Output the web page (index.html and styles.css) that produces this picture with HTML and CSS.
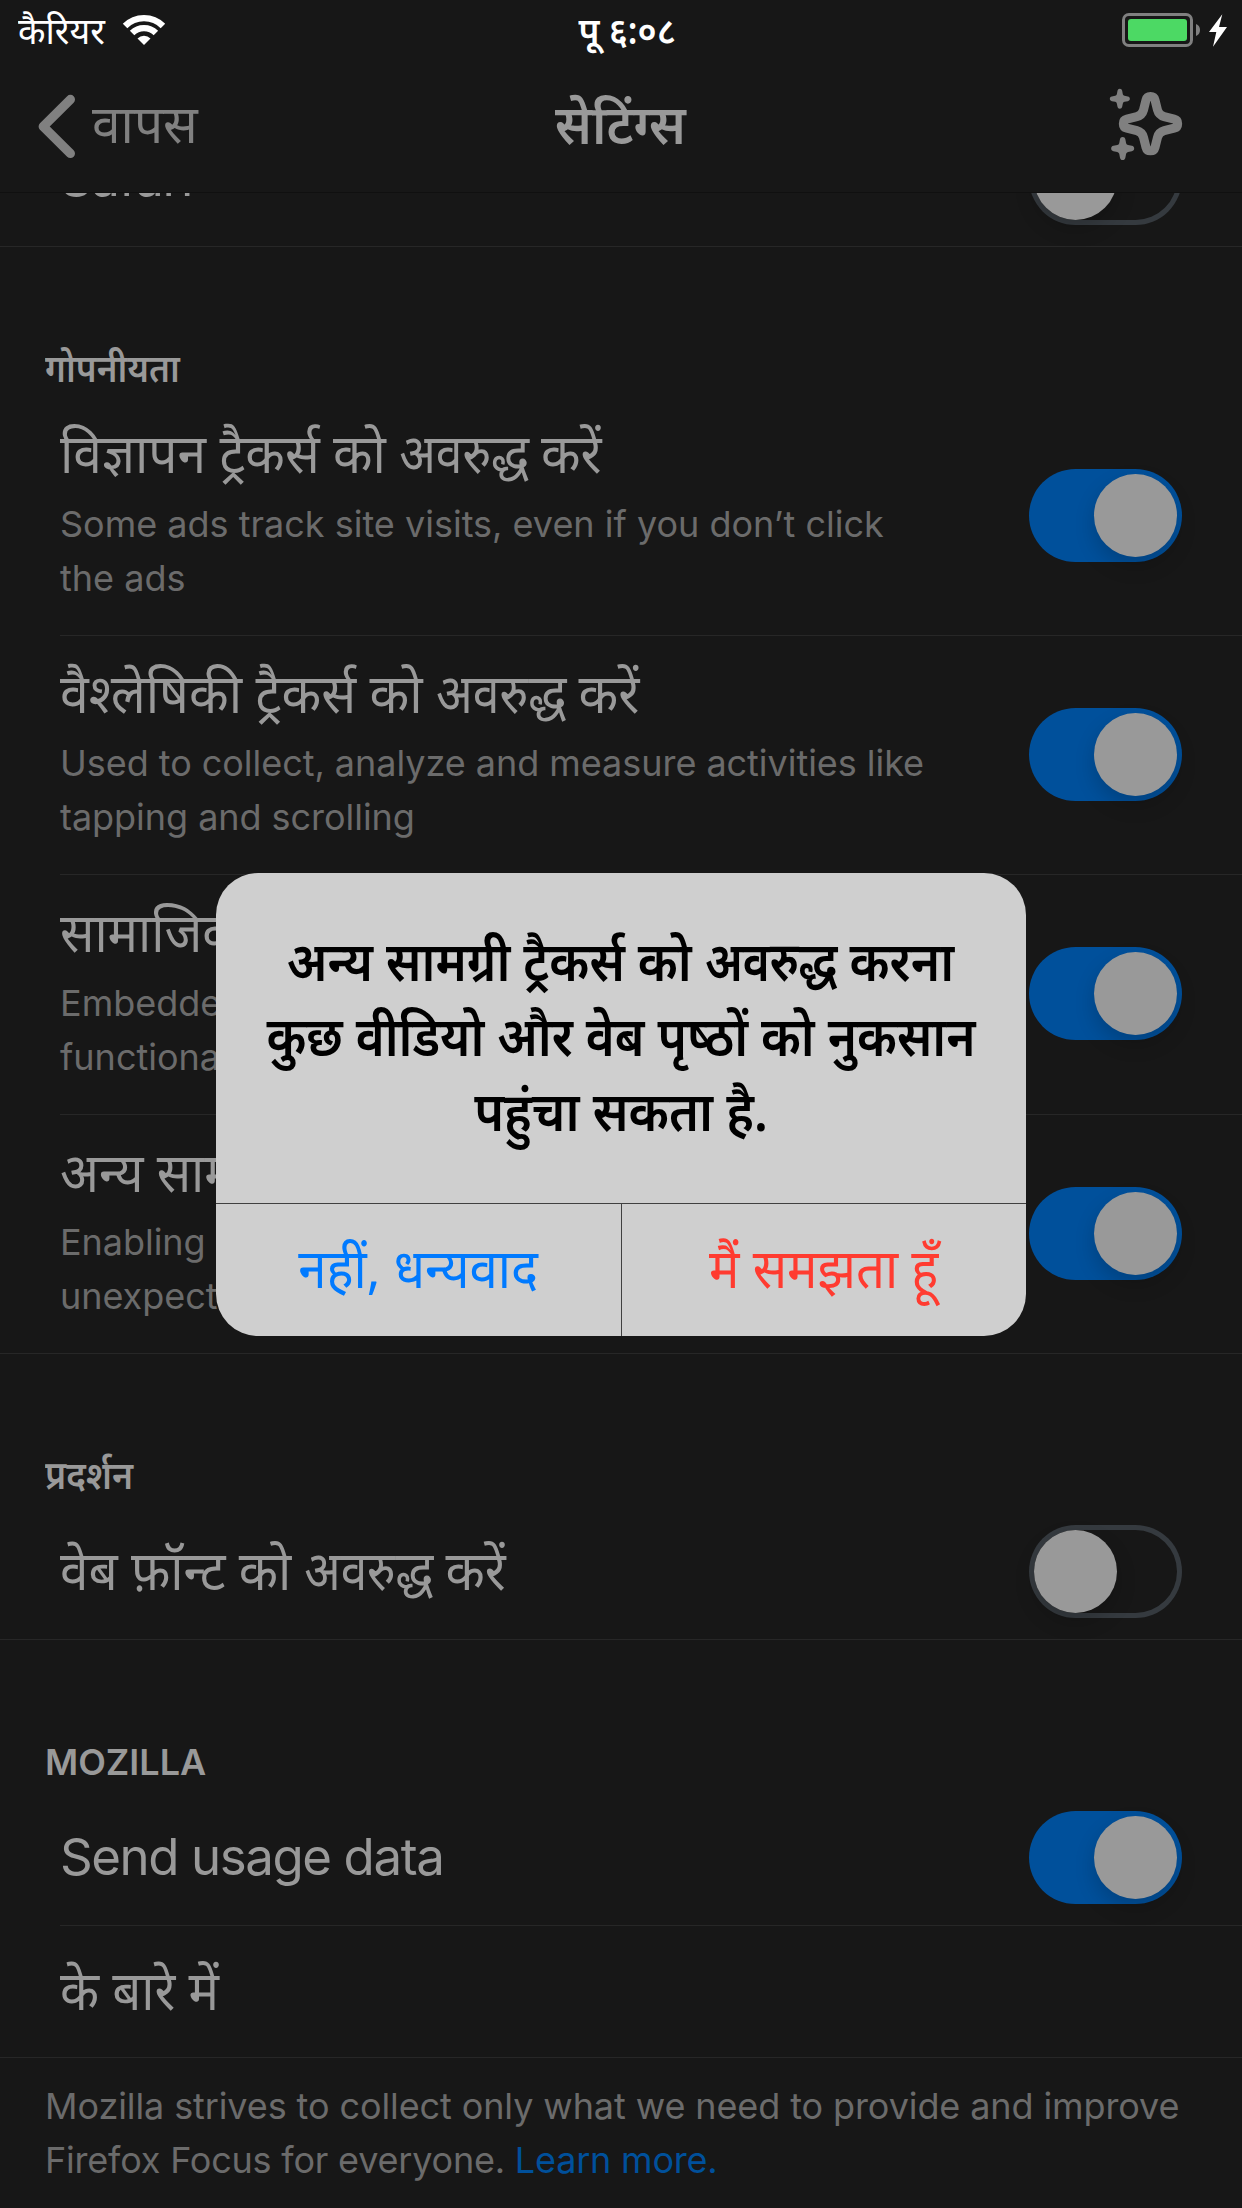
FILE: index.html
```html
<!DOCTYPE html>
<html lang="hi">
<head>
<meta charset="utf-8">
<meta name="viewport" content="width=device-width">
<title>सेटिंग्स</title>
<link rel="stylesheet" href="styles.css">
</head>
<body>
<div class="screen">
  <header class="top">
    <div class="status">
      <div class="status-left">
        <span class="carrier">कैरियर</span>
        <svg class="wifi" width="44" height="32" viewBox="0 0 44 32">
          <path d="M3.05 11.95A26.8 26.8 0 0 1 40.95 11.95" fill="none" stroke="#fff" stroke-width="6.4"/>
          <path d="M10.1 19A16.85 16.85 0 0 1 33.9 19" fill="none" stroke="#fff" stroke-width="6.3"/>
          <path d="M22 31L15.5 24.4A9.4 9.4 0 0 1 28.5 24.4Z" fill="#fff"/>
        </svg>
      </div>
      <span class="time">पू ६:०८</span>
      <svg class="battery" width="108" height="36" viewBox="0 0 108 36">
        <rect x="3.5" y="2.5" width="68" height="31" rx="5.5" fill="none" stroke="#808080" stroke-width="3"/>
        <rect x="8" y="7" width="59" height="22" rx="3" fill="#4cd964"/>
        <path d="M76 12A6.5 6.5 0 0 1 76 24Z" fill="#808080"/>
        <path d="M102.3 2.3L99 15H107L93 34.7L96.3 20H89Z" fill="#fff"/>
      </svg>
    </div>
    <nav class="nav">
      <div class="back">
        <svg width="40" height="66" viewBox="0 0 40 66"><path d="M34.4 6.4L7.2 33.4L34.4 60.4" fill="none" stroke="#808080" stroke-width="9.2" stroke-linecap="round" stroke-linejoin="round"/></svg>
        <span class="back-label">वापस</span>
      </div>
      <h1 class="nav-title">सेटिंग्स</h1>
      <svg class="sparkle" width="110" height="90" viewBox="0 0 330 270">
        <path transform="translate(181.5 131)" d="M0-81.5C7-81.5 12-77 13.5-71L21-41C24-30 30-24 41-21L71-13.5C77-12 81.5-7 81.5 0C81.5 7 77 12 71 13.5L41 21C30 24 24 30 21 41L13.5 71C12 77 7 81.5 0 81.5C-7 81.5-12 77-13.5 71L-21 41C-24 30-30 24-41 21L-71 13.5C-77 12-81.5 7-81.5 0C-81.5-7-77-12-71-13.5L-41-21C-30-24-24-30-21-41L-13.5-71C-12-77-7-81.5 0-81.5Z" fill="none" stroke="#808080" stroke-width="27"/>
        <g fill="#808080">
          <path transform="translate(89.5 56.5)" d="M0-30C4-30 6-28 7-24L9-14Q10-10 14-9L24-7C28-6 30-4 30 0C30 4 28 6 24 7L14 9Q10 10 9 14L7 24C6 28 4 30 0 30C-4 30-6 28-7 24L-9 14Q-10 10-14 9L-24 7C-28 6-30 4-30 0C-30-4-28-6-24-7L-14-9Q-10-10-9-14L-7-24C-6-28-4-30 0-30Z"/>
          <path transform="translate(98 205.5) scale(1.15)" d="M0-30C4-30 6-28 7-24L9-14Q10-10 14-9L24-7C28-6 30-4 30 0C30 4 28 6 24 7L14 9Q10 10 9 14L7 24C6 28 4 30 0 30C-4 30-6 28-7 24L-9 14Q-10 10-14 9L-24 7C-28 6-30 4-30 0C-30-4-28-6-24-7L-14-9Q-10-10-9-14L-7-24C-6-28-4-30 0-30Z"/>
        </g>
      </svg>
    </nav>
  </header>

  <main class="list">
    <section class="clipped">
      <div class="cell cell-single cell-last"><span class="label-latin">Safari</span><span class="switch"></span></div>
    </section>

    <section>
      <h2 class="section-title privacy">गोपनीयता</h2>
      <div class="cell cell-tall">
        <div class="copy"><div class="label ads">विज्ञापन ट्रैकर्स को <span class="tight">अवरुद्ध</span> करें</div><p class="desc">Some ads track site visits, even if you don’t click<br>the ads</p></div>
        <span class="switch on"></span>
      </div>
      <div class="cell cell-tall cell-even">
        <div class="copy"><div class="label analytics">वैश्‍लेषिकी ट्रैकर्स को <span class="tight">अवरुद्ध</span> करें</div><p class="desc">Used to collect, analyze and measure activities like<br>tapping and scrolling</p></div>
        <span class="switch on raised"></span>
      </div>
      <div class="cell cell-tall">
        <div class="copy"><div class="label social">सामाजिक ट्रैकर्स को अवरुद्ध करें</div><p class="desc">Embedded on sites to track your visits and to display<br>functionality like share buttons</p></div>
        <span class="switch on raised"></span>
      </div>
      <div class="cell cell-tall cell-even cell-last">
        <div class="copy"><div class="label other">अन्य सामग्री ट्रैकर्स को अवरुद्ध करें</div><p class="desc">Enabling may cause some pages to behave<br>unexpectedly</p></div>
        <span class="switch on raised"></span>
      </div>
    </section>

    <section>
      <h2 class="section-title performance">प्रदर्शन</h2>
      <div class="cell cell-single cell-last"><span class="label fonts">वेब फ़ॉन्ट को <span class="tight">अवरुद्ध</span> करें</span><span class="switch"></span></div>
    </section>

    <section>
      <h2 class="section-title latin">MOZILLA</h2>
      <div class="cell cell-single"><span class="label-latin">Send usage data</span><span class="switch on"></span></div>
      <div class="cell cell-about cell-last"><span class="label about">के बारे में</span></div>
      <p class="footer">Mozilla strives to collect only what we need to provide and improve<br><span class="footer-end">Firefox Focus for everyone. <a class="link">Learn more.</a></span></p>
    </section>
  </main>

  <div class="alert" role="alertdialog">
    <div class="alert-body">
      <div class="alert-line first">अन्य सामग्री ट्रैकर्स को <span class="tight">अवरुद्ध</span> करना</div>
      <div class="alert-line second">कुछ वीडियो और वेब पृष्‍ठों को नुकसान</div>
      <div class="alert-line third">पहुंचा सकता है.</div>
    </div>
    <div class="alert-actions">
      <div class="action"><span class="action-label">नहीं, धन्यवाद</span></div>
      <div class="action destructive"><span class="action-label">मैं समझता हूँ</span></div>
    </div>
  </div>
</div>
</body>
</html>
```
FILE: styles.css
```css
* { box-sizing: border-box; }

body {
  margin: 0;
  background: #171717;
  color: #999;
  font-family: "Noto Sans", "Noto Sans Devanagari", sans-serif;
}

h1, h2, p { margin: 0; font-weight: inherit; }

.screen {
  position: relative;
  width: 1242px;
  height: 2208px;
  overflow: hidden;
}

/* Status bar and navigation */
.top { height: 193px; border-bottom: 1px solid #101010; }

.status {
  display: grid;
  grid-template-columns: 1fr auto 1fr;
  align-items: start;
  height: 60px;
  padding: 0 15px 0 18px;
  color: #fff;
  line-height: 59px;
}
.status-left { display: flex; gap: 14px; }
.carrier { font-size: 37px; transform: scaleX(.967); transform-origin: left; }
.wifi { margin-top: 14px; }
.time { font-size: 37px; font-weight: 600; transform: scaleX(.95); margin-left: 9px; }
.battery { justify-self: end; margin-top: 12px; margin-right: -1px; }

.nav {
  display: grid;
  grid-template-columns: 1fr auto 1fr;
  height: 132px;
  padding: 0 42px 0 36px;
}
.back { display: flex; align-items: flex-start; padding-top: 33px; gap: 16px; color: #808080; }
.back-label { font-size: 53px; line-height: 60px; transform: scaleX(.97); transform-origin: left; }
.nav-title { font-size: 54px; font-weight: 600; line-height: 60px; margin: 33px 0 0 5px; transform: scaleX(.955); }
.sparkle { justify-self: end; margin-top: 20px; }

/* Settings list */
.clipped {
  display: flex;
  flex-direction: column;
  justify-content: flex-end;
  height: 54px;
  overflow: hidden;
}

.section-title {
  height: 149px;
  padding: 90px 0 0 45px;
  font-size: 39px;
  font-weight: 600;
  line-height: 60px;
  transform-origin: 45px 0;
}
.section-title.privacy { transform: scaleX(.9); }
.section-title.performance { height: 150px; transform: scaleX(.915); }
.section-title.latin { height: 150px; padding-top: 92px; font-family: Inter, sans-serif; font-size: 36px; }

.cell {
  display: flex;
  flex: none;
  align-items: center;
  justify-content: space-between;
  margin-left: 60px;
  padding-right: 60px;
  border-bottom: 1px solid #272727;
}
.cell-last { margin-left: 0; padding-left: 60px; }
.cell-tall { height: 240px; }
.cell-even { height: 239px; }
.cell-single { height: 136px; }
.cell-about { height: 132px; }

.copy { align-self: flex-start; padding-top: 29px; }
.label { font-size: 54px; line-height: 54px; white-space: nowrap; transform-origin: left; }
.copy .label { width: 0; }
.tight { display: inline-block; transform: scaleX(.93); transform-origin: left; margin-right: -12px; }
.ads { transform: scaleX(.953); }
.analytics { transform: scaleX(.957); }
.social, .other { transform: scaleX(.943); }
.fonts { transform: scaleX(.947); margin-bottom: 6px; }
.about { transform: scaleX(.942); margin-bottom: 5px; }
.label-latin { font: 51px/54px Inter, sans-serif; letter-spacing: -1.42px; margin-bottom: 2px; }
.desc {
  margin-top: 18px;
  color: #6b6b6b;
  font: 36px/54px Inter, sans-serif;
  white-space: nowrap;
}
.cell-even .desc { margin-top: 17px; letter-spacing: -.04px; }

.switch {
  flex: none;
  width: 153px;
  height: 93px;
  padding: 5px;
  border-radius: 47px;
  box-shadow: inset 0 0 0 5px #353a3f;
}
.switch::before {
  content: "";
  display: block;
  width: 83px;
  height: 83px;
  border-radius: 50%;
  background: #999;
  box-shadow: 0 9px 20px rgba(0, 0, 0, .18);
}
.switch.on { background: #00509b; box-shadow: none; }
.switch.on::before { margin-left: auto; }
.raised { margin-bottom: 2px; }

.footer {
  padding: 21px 0 0 45px;
  color: #6b6b6b;
  font: 36px/54px Inter, sans-serif;
  letter-spacing: -.1px;
  white-space: nowrap;
}
.footer-end { letter-spacing: -.2px; }
.link { color: #00509b; }

/* Confirmation dialog */
.alert {
  position: absolute;
  left: 216px;
  top: 873px;
  display: flex;
  flex-direction: column;
  width: 810px;
  height: 463px;
  border-radius: 42px;
  background: #cfcfcf;
  overflow: hidden;
}
.alert-body {
  display: flex;
  flex-direction: column;
  align-items: center;
  height: 331px;
  padding-top: 49px;
  border-bottom: 1px solid #404040;
  color: #000;
}
.alert-line { font-size: 55px; font-weight: 600; line-height: 75px; white-space: nowrap; }
.first { transform: scaleX(.903); }
.second { transform: scaleX(.9); }
.third { transform: scaleX(.912); }

.alert-actions { display: flex; height: 132px; }
.action {
  flex: 1;
  display: flex;
  justify-content: center;
  padding-top: 33px;
  color: #007aff;
  font-size: 54px;
  line-height: 60px;
}
.action + .action { border-left: 1px solid #404040; }
.destructive { color: #ff3b30; }
.action-label { transform: scaleX(.942); white-space: nowrap; }
```
